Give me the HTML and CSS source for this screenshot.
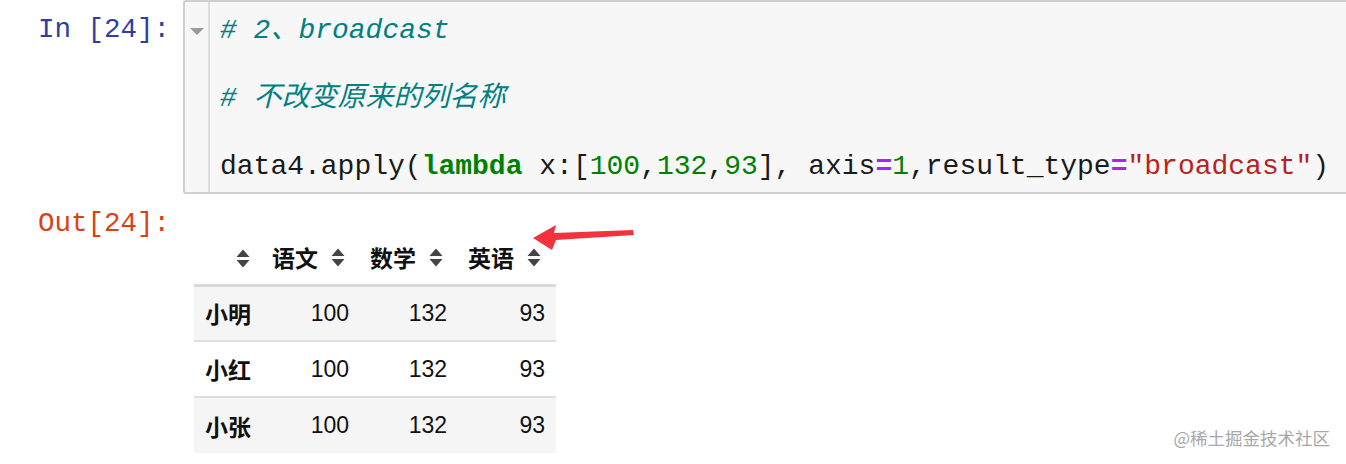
FILE: index.html
```html
<!DOCTYPE html>
<html lang="zh">
<head>
<meta charset="utf-8">
<title>broadcast</title>
<link rel="stylesheet" href="styles.css">
</head>
<body>
<div class="nb">
  <div class="cell in-cell">
    <div class="prompt in-prompt">In&nbsp;[24]:</div>
    <div class="input-box">
      <div class="gutter"><span class="fold"></span></div>
      <pre class="code"><span class="c"># 2、broadcast</span>

<span class="c cjk"># 不改变原来的列名称</span>

data4.apply(<span class="k">lambda</span> x:[<span class="n">100</span>,<span class="n">132</span>,<span class="n">93</span>], axis<span class="o">=</span><span class="n">1</span>,result_type<span class="o">=</span><span class="s">"broadcast"</span>)</pre>
    </div>
  </div>
  <div class="cell out-cell">
    <div class="prompt out-prompt">Out[24]:</div>
    <div class="output">
      <table class="df">
        <thead>
          <tr>
            <th class="idx"><span class="sort"><svg width="14" height="19" viewBox="0 0 14 19"><path d="M0.5 8 L7 0.5 L13.5 8 Z M0.5 11 L13.5 11 L7 18.5 Z" fill="#444444"/></svg></span></th>
            <th><span class="lbl">语文</span><span class="sort"><svg width="14" height="19" viewBox="0 0 14 19"><path d="M0.5 8 L7 0.5 L13.5 8 Z M0.5 11 L13.5 11 L7 18.5 Z" fill="#444444"/></svg></span></th>
            <th><span class="lbl">数学</span><span class="sort"><svg width="14" height="19" viewBox="0 0 14 19"><path d="M0.5 8 L7 0.5 L13.5 8 Z M0.5 11 L13.5 11 L7 18.5 Z" fill="#444444"/></svg></span></th>
            <th><span class="lbl">英语</span><span class="sort"><svg width="14" height="19" viewBox="0 0 14 19"><path d="M0.5 8 L7 0.5 L13.5 8 Z M0.5 11 L13.5 11 L7 18.5 Z" fill="#444444"/></svg></span></th>
          </tr>
        </thead>
        <tbody>
          <tr class="odd"><th class="idx">小明</th><td>100</td><td>132</td><td>93</td></tr>
          <tr><th class="idx">小红</th><td>100</td><td>132</td><td>93</td></tr>
          <tr class="odd"><th class="idx">小张</th><td>100</td><td>132</td><td>93</td></tr>
        </tbody>
      </table>
    </div>
  </div>
</div>
<svg class="arrow" width="120" height="40" viewBox="0 0 120 40">
  <path d="M3 18 L26 5 L24 13 L103 10 L104 15 L26 20 L22 30 Z" fill="#f2323d"/>
</svg>
<div class="watermark">@稀土掘金技术社区</div>
</body>
</html>
```
FILE: styles.css
```css
html, body {
  margin: 0;
  padding: 0;
  background: #ffffff;
}
body {
  position: relative;
  width: 1346px;
  height: 464px;
  overflow: hidden;
  font-family: "Liberation Sans", "Noto Sans CJK SC", sans-serif;
}
.nb {
  display: flex;
  flex-direction: column;
}
.cell {
  display: flex;
  align-items: flex-start;
}
.prompt {
  width: 170px;
  box-sizing: border-box;
  padding-left: 38px;
  font-family: "Liberation Mono", "Noto Sans CJK SC", monospace;
  font-size: 27.5px;
  line-height: 34px;
  white-space: nowrap;
}
.in-prompt {
  color: #303f9f;
  padding-top: 13px;
}
.out-prompt {
  color: #d84315;
  padding-top: 13px;
}
.input-box {
  margin-left: 13px;
  flex: 1;
  display: flex;
  background: #f7f7f7;
  border: 2px solid #cfcfcf;
  border-right: none;
  border-radius: 3px 0 0 3px;
  height: 190px;
}
.gutter {
  width: 25px;
  border-right: 2px solid #dddddd;
  display: flex;
  justify-content: center;
  padding-top: 26px;
  box-sizing: border-box;
}
.fold {
  width: 0;
  height: 0;
  border-left: 7px solid transparent;
  border-right: 7px solid transparent;
  border-top: 7px solid #9a9a9a;
}
.code {
  margin: 0;
  padding: 12px 0 0 10px;
  font-family: "Liberation Mono", "Noto Sans CJK SC", monospace;
  font-size: 28px;
  line-height: 34px;
  color: #1a1a1a;
}
.c {
  color: #008080;
  font-style: italic;
}
.k {
  color: #008000;
  font-weight: bold;
}
.n {
  color: #008000;
}
.o {
  color: #aa22ff;
  font-weight: bold;
}
.s {
  color: #ba2121;
}
.output {
  padding-top: 37px;
  padding-left: 24px;
}
.df {
  border-collapse: collapse;
  font-size: 23px;
  color: #111111;
}
.df thead th {
  height: 54px;
  width: 98px;
  padding: 0 12px 0 10px;
  border-bottom: 3px solid #dadada;
  font-weight: bold;
  text-align: left;
  white-space: nowrap;
  box-sizing: border-box;
}
.df thead th.idx {
  width: 68px;
  text-align: right;
}
.lbl {
  display: inline-block;
  vertical-align: middle;
  width: 59px;
}
.sort {
  display: inline-block;
  vertical-align: middle;
  line-height: 0;
}
.df tbody tr {
  height: 56px;
}
.df tbody th, .df tbody td {
  padding: 0 11px;
}
.df tbody th {
  text-align: left;
  font-weight: bold;
}
.df tbody td {
  text-align: right;
}
.df tbody tr + tr th, .df tbody tr + tr td {
  border-top: 2px solid #dedede;
}
.df tbody tr.odd {
  background: #f5f5f5;
}
.arrow {
  position: absolute;
  left: 530px;
  top: 220px;
}
.watermark {
  position: absolute;
  right: 16px;
  top: 426px;
  font-family: "Noto Sans CJK SC", sans-serif;
  font-size: 17.5px;
  line-height: 24px;
  color: #a8a8a8;
}
```
